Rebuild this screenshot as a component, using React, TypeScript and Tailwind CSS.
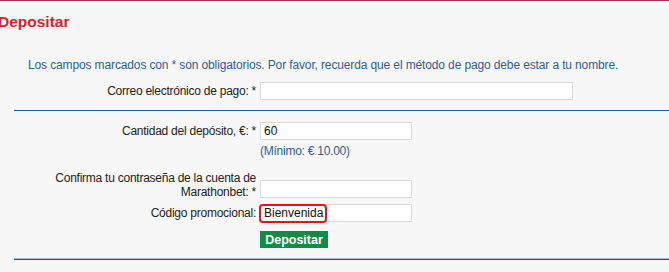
import React from "react";

const font = { fontFamily: '"Liberation Sans", Arial, sans-serif' };

function Row({ label, children, className = "" }: { label: React.ReactNode; children: React.ReactNode; className?: string }) {
  return (
    <div className={`flex items-center ${className}`}>
      <div className="w-[246px] shrink-0 text-right pr-[4px] text-[12px] tracking-[-0.25px] leading-[14px] text-[#222]">{label}</div>
      <div className="flex-1">{children}</div>
    </div>
  );
}

export default function App() {
  return (
    <div className="w-[669px] h-[272px] bg-[#f7f7f7] overflow-hidden border-t border-[#a0305a]" style={font}>
      <div className="-ml-[2px] mt-[12px] text-[15.5px] font-bold leading-[18px] text-[#d7202e]">Depositar</div>
      <div className="pl-[14px]">
        <div className="pl-[14px] mt-[27px] text-[12px] tracking-[-0.13px] leading-[14px] text-[#2c5d9b]">
          Los campos marcados con * son obligatorios. Por favor, recuerda que el método de pago debe estar a tu nombre.
        </div>
        <Row label="Correo electrónico de pago: *" className="mt-[10px]">
          <div className="w-[313px] h-[18px] bg-white border border-[#d8d8d8]" />
        </Row>
        <div className="mt-[10px] h-px bg-[#2a5b94]" />
        <Row label="Cantidad del depósito, €: *" className="mt-[11px]">
          <div className="w-[152px] h-[18px] bg-white border border-[#d8d8d8] text-[12px] leading-[16px] pl-[3px] text-[#111]">60</div>
        </Row>
        <div className="pl-[246px] mt-[4px] text-[12px] tracking-[-0.25px] leading-[14px] text-[#2c5d9b]">(Mínimo: € 10.00)</div>
        <Row label={<>Confirma tu contraseña de la cuenta de<br />Marathonbet: *</>} className="mt-[13px]">
          <div className="w-[152px] h-[18px] bg-white border border-[#d8d8d8] mt-[8px]" />
        </Row>
        <Row label="Código promocional:" className="mt-[5px]">
          <div className="w-[152px] h-[18px] bg-white border border-[#d8d8d8] text-[12px] leading-[16px] text-[#111] relative">
            <span className="absolute -left-[2px] -top-[1px] h-[19px] w-[68px] rounded-[4px] border-2 border-[#e0141e]" />
            <span className="pl-[3px]">Bienvenida</span>
          </div>
        </Row>
        <div className="flex pl-[246px] mt-[9px]">
          <div className="flex w-[68px] h-[17px] items-center justify-center bg-[#138a48] text-white text-[12.5px] font-bold leading-[14px]">
            Depositar
          </div>
        </div>
        <div className="mt-[10px] h-[2px] bg-[#1f4f8c] border-t border-[#a9bfd8]" />
      </div>
    </div>
  );
}
